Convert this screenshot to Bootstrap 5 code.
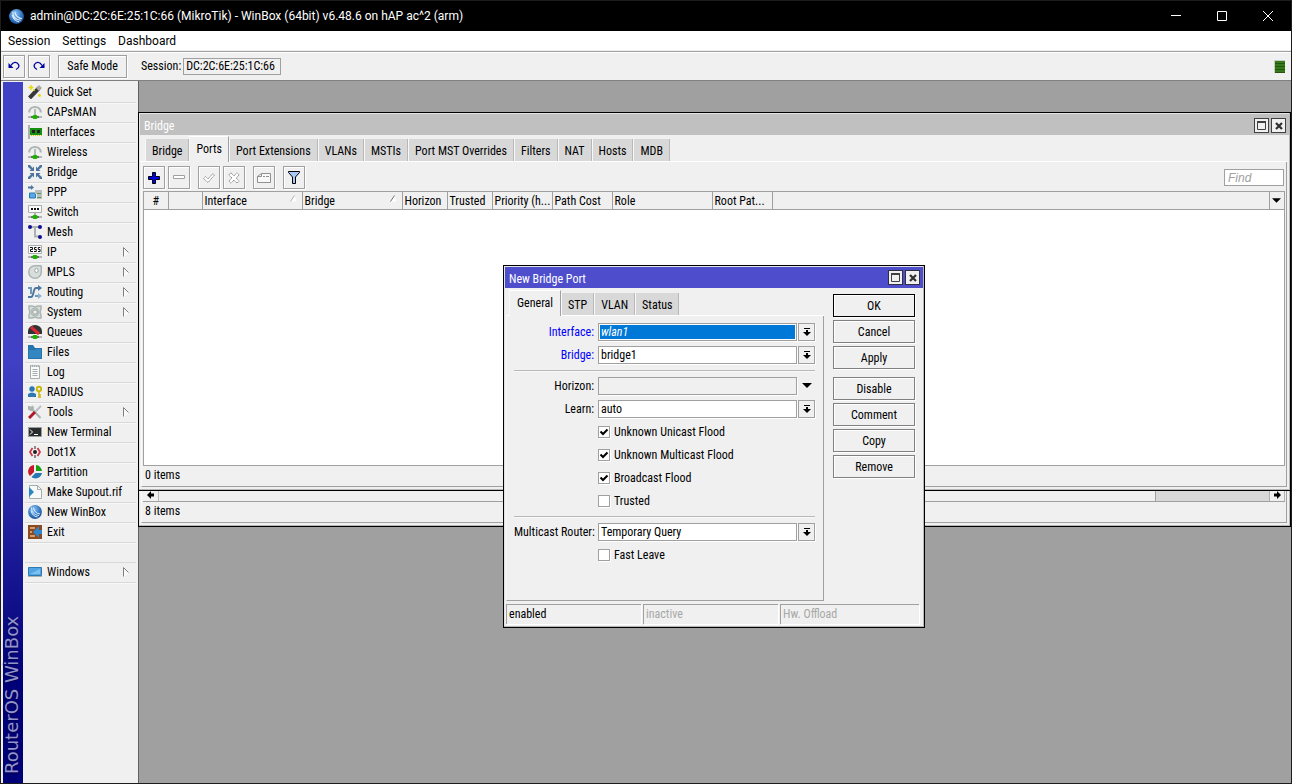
<!DOCTYPE html>
<html lang="en">
<head>
<meta charset="utf-8">
<meta name="viewport" content="width=device-width, initial-scale=1">
<title>WinBox</title>
<link rel="stylesheet" href="https://cdn.jsdelivr.net/npm/bootstrap@5.3.0/dist/css/bootstrap.min.css">
<script src="https://cdn.jsdelivr.net/npm/bootstrap@5.3.0/dist/js/bootstrap.bundle.min.js"></script>
<style>
:root{--face:#f0f0f0;--edge:#a0a0a0;--tab:#d8d8d8}
body{font:12px/16px "Roboto Condensed","Roboto",sans-serif;color:#000;background:var(--face);border:1px solid #1c1c1c;overflow:hidden}
button,input,select{font:inherit;color:inherit;border-radius:0}
svg{display:block;flex:none}
.titlebar{height:30px;background:#000;color:#fff;font:12px/16px "Roboto",sans-serif;padding-left:8px;gap:6px}
.titlebar button{width:46px;height:30px;background:none;border:0;color:#fff;display:grid;place-items:center;padding:0;margin-left:-6px}
.titlebar button:last-child{margin-right:0}
.menubar{height:19px;background:#fff;font:12px/16px "Roboto",sans-serif;gap:12px;padding:2px 7px}
.menubar a{color:#000;text-decoration:none}
.toolbar-main{height:30px;border-top:1px solid var(--edge);border-bottom:1px solid #808080;box-shadow:inset 0 1px #fff;padding:0 6px 0 2px;margin-top:1px}
.tbtn{width:22px;height:23px;border:1px solid var(--edge);background:var(--face);box-shadow:1px 1px #fff,inset 1px 1px #fff;display:grid;place-items:center;padding:0}
.tbtn.near{margin-left:3px}
.safe{width:69px}
.toolbar-main label{margin:0 2px 0 14px}
.sess{width:98px;height:17px;border:1px solid var(--edge);background:var(--face);padding:0 2px;line-height:15px}
.led{width:11px;height:13px;background:repeating-linear-gradient(#357a1a 0 2px,#23560f 2px 3px);border-top:1px solid #c8c8c8;border-left:1px solid #c8c8c8}
.work{min-height:0}
.side{width:137px;padding:1px 2px 0 2px}
.brand{width:20px;background:linear-gradient(#4040c4 0%,#4040c4 40%,#000078 86%);color:#9494c8;font:18px/20px "DejaVu Sans",sans-serif;text-shadow:-1px -1px 2px #00004a}
.brand span{writing-mode:vertical-rl;transform:rotate(180deg);height:100%;padding-top:9px;line-height:18px}
.mainmenu{margin:1px 0 0 2px}
.mainmenu a{height:20px;padding:0 7px 1px 3px;gap:5px;border-bottom:1px solid #d8d8d8;box-shadow:0 1px #f8f8f8;color:#000;text-decoration:none}
.mainmenu a .arrow{margin-left:auto}
.gap{height:20px;border-bottom:1px solid #d8d8d8}
.desk{background:#a0a0a0;box-shadow:inset 1px 0 #606060}
.win{position:absolute;background:var(--face);border:1px solid #000;padding:1px 2px 2px 1px;box-shadow:inset -1px -1px #b8b8b8,inset 1px 1px #e4e4e4}
.w-back{left:0;right:0;top:320px;height:126px}
.w-bridge{left:0;right:0;top:31px;height:379px}
.w-port{left:365px;top:184px;width:422px;height:363px}
.cap{height:21px;background:#c0c0c0;color:#fff;padding:4px 3px 0 4px;margin-right:-1px;gap:2px}
.cap button{width:15px;height:15px;border:1px solid #404040;background:var(--face);display:grid;place-items:center;padding:0}
.w-port .cap{background:#4e4ecc;padding-top:3px}
.w-port .cap button{border-color:#303040}
.w-port .cap span{line-height:18px}
.tabs{height:27px;padding:5px 0 0 5px;border-bottom:1px solid #fff;align-items:flex-end}
.tabs button{height:22px;background:var(--tab);border:0;border-left:1px solid #f8f8f8;border-right:1px solid #b8b8b8;padding:2px 6px 0;line-height:20px;white-space:nowrap}
.tabs button.on{height:26px;background:var(--face);border-top:1px solid #fff;border-right-color:var(--edge);margin-bottom:-1px;padding-bottom:3px}
.pane{border-right:1px solid var(--edge);border-bottom:1px solid var(--edge);border-left:1px solid #f8f8f8}
.w-bridge .pane{margin:0 1px 1px 1px}
.w-back .pane{margin:0 1px 1px 1px}
.strip{height:29px;padding:4px 2px 0 1px}
.find{width:60px;height:17px;border:1px solid var(--edge);padding:0 3px;margin-top:3px;font:italic 12px/15px "Liberation Sans",sans-serif;color:#a0a0a0}
.find::placeholder{color:#a0a0a0}
.grid-box{margin:0 1px;border:1px solid var(--edge);background:#fff}
.grid-box table{table-layout:fixed;width:100%;border-collapse:collapse}
.grid-box th{height:17px;padding:2px 2px 0;font-weight:400;line-height:14px;background:var(--face);border-right:1px solid var(--edge);border-bottom:1px solid var(--edge);white-space:nowrap;overflow:hidden}
.grid-box th:last-child{border-right:0}
.grid-box th svg{float:right;margin:1px 1px 0 0}
.grid-box th button{border:0;background:none;padding:0;width:14px;height:14px;display:grid;place-items:center}
.grid-box th button svg{margin:0}
.count{height:20px;padding:1px 3px}
.form-row{height:23px;gap:4px}
.form-row>label:first-child,.form-row>.lab{width:80px;text-align:right;white-space:nowrap}
.fld{width:199px;height:18px;border:1px solid var(--edge);background:#fff;padding:1px 2px 0;appearance:none;line-height:15px;box-shadow:1px 1px #fff}
.fld.sel{background:#0078d7;color:#fff;font-style:italic;box-shadow:1px 1px #fff,inset 0 0 0 1px #fff}
.fld:disabled{background:var(--face);opacity:1}
.drop{width:17px;height:18px;border:1px solid var(--edge);background:var(--face);display:grid;place-items:center;padding:0;margin-left:-3px;box-shadow:1px 1px #fff}
.drop.bare{border-color:transparent;box-shadow:none}
.req{color:#00f}
.chk{appearance:none;width:12px;height:12px;margin:0;border:1px solid var(--edge);background:#fff;box-shadow:1px 1px #fff}
.chk:checked{background:#fff url("data:image/svg+xml,%3Csvg xmlns='http://www.w3.org/2000/svg' viewBox='0 0 10 10'%3E%3Cpath d='M1.5 4.5 4 7 8.500 2.500' fill='none' stroke='%23000' stroke-width='2'/%3E%3C/svg%3E") center/10px 10px no-repeat}
.rule{height:1px;background:#b8b8b8;margin:4px 0 3px;box-shadow:0 1px #f8f8f8}
.w-port .pane{width:318px;padding:4px 8px 0 7px;margin-left:1px}
.w-port .tabs{width:318px;height:28px;margin-left:1px;padding-left:3px}
.w-port .tabs .on{padding-left:7px;padding-right:7px}
.cmds{width:82px;margin:6px 7px 0 0;gap:3px}
.cmds button{height:23px;border:1px solid #808080;background:var(--face);box-shadow:1px 1px #fff,inset 1px 1px #fff;padding:0}
.cmds .def{border-color:#000}
.cmds .apart{margin-top:5px}
.states{gap:2px;margin:3px 3px 1px 1px}
.cell{flex:0 0 135px;height:20px;border-top:1px solid var(--edge);border-left:1px solid var(--edge);box-shadow:1px 1px #fff;padding:1px 2px}
.cell:last-child{flex:1}
.off{color:#a8a8a8}
.scroller{height:12px;border-bottom:1px solid var(--edge);background:var(--tab);margin:0 1px}
.thumb{background:var(--face);border-right:1px solid var(--edge)}
</style>
</head>
<body class="vh-100 d-flex flex-column">
<svg width="0" height="0" class="position-absolute">
 <defs>
  <radialGradient id="ball" cx=".4" cy=".3" r=".8"><stop offset="0" stop-color="#8cc4f4"/><stop offset=".6" stop-color="#2f72be"/><stop offset="1" stop-color="#184a90"/></radialGradient>
  <symbol id="winbox" viewBox="0 0 14 14"><circle cx="7" cy="7" r="6.9" fill="url(#ball)"/><path d="M3.5 2.5C3.5 7 6 10 11 10.500M5.500 2.500C6 6 8 8.500 12 9M3 5.500C4 9.500 6 11.500 9.500 12" fill="none" stroke="#dceeff" stroke-width="1"/></symbol>
  <symbol id="port" viewBox="0 0 14 14"><path d="M0 12h14" stroke="#b4b8b4" stroke-width="2"/><path d="M3 12h8" stroke="#555" stroke-width="1.500"/><path d="M5.500 10h3l1 1v2l-1 1h-3l-1-1v-2z" fill="#1cb000"/></symbol>
  <symbol id="antenna" viewBox="0 0 14 14"><path d="M1.200 7.500C1.200 0 12.800 0 12.800 7.500" fill="none" stroke="#aeb6b4" stroke-width="2"/><path d="M7 4v7" stroke="#a4acaa" stroke-width="1.600"/><use href="#port"/></symbol>
  <symbol id="more" viewBox="0 0 6 10"><path d="M5.500 5.500.5 9.500V.5z" fill="#f8f8f8" stroke="#fff"/><path d="M.5 9.500V.5l5 5" fill="none" stroke="#808080"/></symbol>
  <symbol id="dropbar" viewBox="0 0 8 8"><path d="M1 0h6v1H1zM3 2h2v2h3L4 8 0 4h3z"/></symbol>
  <symbol id="droptri" viewBox="0 0 10 5"><path d="M0 0h10L5 5z"/></symbol>
  <symbol id="max" viewBox="0 0 9 9"><path d="M.5 1h8v7.500h-8z" fill="none" stroke="#404040"/><path d="M0 1h9" stroke="#404040" stroke-width="2"/></symbol>
  <symbol id="cls" viewBox="0 0 8 8"><path d="M1 1l6 6M7 1 1 7" stroke="#303030" stroke-width="2.200"/></symbol>
 </defs>
</svg>

<header class="titlebar d-flex align-items-center flex-shrink-0">
 <svg width="15" height="15"><use href="#winbox"/></svg>
 <span class="me-auto text-nowrap">admin@DC:2C:6E:25:1C:66 (MikroTik) - WinBox (64bit) v6.48.6 on hAP ac^2 (arm)</span>
 <button aria-label="Minimize"><svg width="10" height="10"><path d="M0 4.500h10" stroke="#fff"/></svg></button>
 <button aria-label="Maximize"><svg width="10" height="10"><path d="M.5.5h9v9h-9z" fill="none" stroke="#fff"/></svg></button>
 <button aria-label="Close"><svg width="10" height="10"><path d="M0 0l10 10M10 0 0 10" stroke="#fff"/></svg></button>
</header>
<nav class="menubar d-flex flex-shrink-0"><a href="#">Session</a><a href="#">Settings</a><a href="#">Dashboard</a></nav>
<div class="toolbar-main d-flex align-items-center flex-shrink-0">
 <button class="tbtn" aria-label="Undo"><svg width="12" height="10" fill="none" stroke="#0000a0"><path d="M3 4.500C5 .5 9 .5 10.500 3.500 12 6.500 9 8 8 8.500" stroke-width="1.300"/><path d="M.5 2v5h5z" fill="#0000a0" stroke="none"/></svg></button>
 <button class="tbtn near" aria-label="Redo"><svg width="12" height="10" fill="none" stroke="#0000a0"><path d="M9 4.500C7 .5 3 .5 1.500 3.500 0 6.500 3 8 4 8.500" stroke-width="1.300"/><path d="M11.500 2v5h-5z" fill="#0000a0" stroke="none"/></svg></button>
 <button class="tbtn safe ms-2">Safe Mode</button>
 <label for="sess">Session:</label>
 <input id="sess" class="sess me-auto" value="DC:2C:6E:25:1C:66" readonly>
 <span class="led"></span>
</div>

<div class="work d-flex flex-grow-1">
 <aside class="side d-flex flex-shrink-0">
  <div class="brand"><span class="d-block">RouterOS WinBox</span></div>
  <ul class="mainmenu list-unstyled flex-grow-1">
   <li><a href="#" class="d-flex align-items-center"><svg width="14" height="14"><path d="M1.500 13 11 3" stroke="#383838" stroke-width="4"/><path d="M9.500 4.500 12.500 1.500" stroke="#a8a8a8" stroke-width="4"/><path d="M3 0v5M.5 2.500h5M11.500 9v3M10 10.500h3M5 5h2" stroke="#e4dc10" stroke-width="1.500"/></svg>Quick Set</a></li>
   <li><a href="#" class="d-flex align-items-center"><svg width="14" height="14"><use href="#antenna"/></svg>CAPsMAN</a></li>
   <li><a href="#" class="d-flex align-items-center"><svg width="14" height="14"><path d="M1 0v14" stroke="#a8b0b0" stroke-width="2"/><path d="M2 3h12v7H2z" fill="#159010"/><path d="M4 5h3v3H4zM9 5h3v3H9z" fill="#222"/><path d="M3 10.500h11" stroke="#d8c818" stroke-dasharray="1 1"/></svg>Interfaces</a></li>
   <li><a href="#" class="d-flex align-items-center"><svg width="14" height="14"><use href="#antenna"/></svg>Wireless</a></li>
   <li><a href="#" class="d-flex align-items-center"><svg width="14" height="14" fill="#4c769e"><path d="M6 6H1.500L3 4.500 0 2V0h2l2.500 3L6 1.500zM8 6V1.500L9.500 3 12 0h2v2l-3 2.500L12.500 6zM6 8v4.500L4.500 11 2 14H0v-2l3-2.500L1.500 8zM8 8h4.500L11 9.500l3 2.500v2h-2l-2.500-3L8 12.500z"/></svg>Bridge</a></li>
   <li><a href="#" class="d-flex align-items-center"><svg width="14" height="14"><path d="M0 2.500h4" stroke="#4c769e" stroke-width="2"/><path d="M3 0l3 2.500L3 5z" fill="#4c769e"/><path d="M1.500 8h6v5h-6z" fill="#58a8e8" stroke="#2878b8"/><path d="M7 5h7v9H9V9H7z" fill="#b8bebc"/><path d="M9 8.500h4M9 12.500h4" stroke="#5a9a50"/></svg>PPP</a></li>
   <li><a href="#" class="d-flex align-items-center"><svg width="14" height="14"><path d="M.5.500h13v7H.5z" fill="#fafafa" stroke="#a8b0ae"/><path d="M3 4h8" stroke="#111" stroke-width="2" stroke-dasharray="2 1"/><path d="M7 7v4" stroke="#a8b0ae" stroke-width="2"/><use href="#port"/></svg>Switch</a></li>
   <li><a href="#" class="d-flex align-items-center"><svg width="14" height="14"><path d="M3 2h8M7 2v9.500h4" fill="none" stroke="#aab2b0" stroke-width="2"/><g fill="#101090"><circle cx="2" cy="2" r="2"/><circle cx="12" cy="2" r="2"/><circle cx="12" cy="12" r="2"/></g></svg>Mesh</a></li>
   <li><a href="#" class="d-flex align-items-center"><svg width="14" height="14"><path d="M.5.5h13v8H.5z" fill="#fafafa" stroke="#a8b0ae"/><path d="M2 2.500h2.500v2H2.500v2H5M8.500 2.500H6.500v2h1.800v2H6M12.300 2.500h-2v2h1.800v2H10" fill="none" stroke="#111"/><use href="#port"/></svg>IP<svg class="arrow" width="6" height="10"><use href="#more"/></svg></a></li>
   <li><a href="#" class="d-flex align-items-center"><svg width="14" height="14"><path d="M7 0h6l1 1v6a7 7 0 1 1-7-7z" fill="#aab4b2"/><path d="M7 1.500h5.500V7a5.500 5.500 0 1 1-5.500-5.500z" fill="#d8dedc"/><ellipse cx="8.500" cy="5.500" rx="1.700" ry="2.200" fill="#fff" stroke="#9ca6a4"/></svg>MPLS<svg class="arrow" width="6" height="10"><use href="#more"/></svg></a></li>
   <li><a href="#" class="d-flex align-items-center"><svg width="14" height="14" fill="none" stroke-width="2"><path d="M0 12h3c3 0 2-9 5-9h3" stroke="#4c769e"/><path d="M0 3h3v6M7 11h4" stroke="#6c98bc"/><path d="M10 0l4 3-4 3z" fill="#4c769e"/><path d="M10 8l4 3-4 3z" fill="#8cb4d4"/></svg>Routing<svg class="arrow" width="6" height="10"><use href="#more"/></svg></a></li>
   <li><a href="#" class="d-flex align-items-center"><svg width="14" height="14" fill="none" stroke="#aab4b0"><path d="M1 1h3l3 1 3-1h3v3l-1 3 1 3v3h-3l-3-1-3 1H1v-3l1-3-1-3z" stroke-width="1.500" fill="#d8dedb"/><circle cx="7" cy="7" r="4"/><circle cx="7" cy="7" r="2.300" stroke-width="1.500" fill="#f0f0f0"/></svg>System<svg class="arrow" width="6" height="10"><use href="#more"/></svg></a></li>
   <li><a href="#" class="d-flex align-items-center"><svg width="14" height="14"><path d="M0 9V6a7 6 0 0 1 14 0v3z" fill="#303434"/><path d="M3 2l8 7" stroke="#d82838" stroke-width="3"/><use href="#port"/></svg>Queues</a></li>
   <li><a href="#" class="d-flex align-items-center"><svg width="14" height="14"><path d="M0 0h5l2 3h7v11H0z" fill="#2474ae"/><path d="M1 5h6l2-1h4v9H1z" fill="#3486c0"/></svg>Files</a></li>
   <li><a href="#" class="d-flex align-items-center"><svg width="14" height="14"><path d="M2.500 1h9v12.500h-9z" fill="#fafafa" stroke="#a4aeaa"/><path d="M2 1h10" stroke="#a4aeaa" stroke-width="2" stroke-dasharray="1 1"/><path d="M4.500 4.500h5M4.500 6.500h5M4.500 8.500h5M4.500 10.500h5" stroke="#a4aeaa"/></svg>Log</a></li>
   <li><a href="#" class="d-flex align-items-center"><svg width="14" height="14"><circle cx="4" cy="4" r="2.700" fill="#2c78b0"/><path d="M0 12V9q4-3 8 0v3z" fill="#2c78b0"/><circle cx="11" cy="4" r="2.200" fill="none" stroke="#ccb80c" stroke-width="2"/><path d="M11 6v7M11 10h2M11 12h2" stroke="#ccb80c" stroke-width="1.500"/></svg>RADIUS</a></li>
   <li><a href="#" class="d-flex align-items-center"><svg width="14" height="14" fill="none"><path d="M2 2l10.500 11M1 1v3l2 1 2-2-1-2" stroke="#a8b2b0" stroke-width="2"/><path d="M13 1 7 7" stroke="#b8c0be" stroke-width="2"/><path d="M7 7l-6 6" stroke="#b01828" stroke-width="3"/></svg>Tools<svg class="arrow" width="6" height="10"><use href="#more"/></svg></a></li>
   <li><a href="#" class="d-flex align-items-center"><svg width="14" height="14"><path d="M.5 2.500h13v9H.5z" fill="#282c2c" stroke="#98a09e"/><path d="M2 4.500 4.500 7 2 9.500M6 9.500h4" fill="none" stroke="#fff"/></svg>New Terminal</a></li>
   <li><a href="#" class="d-flex align-items-center"><svg width="14" height="14" fill="none"><path d="M4.500 3 2 7l2.500 4M9.500 3 12 7l-2.500 4" stroke="#cc3a4a" stroke-width="1.800"/><path d="M7 1v12" stroke="#222" stroke-dasharray="3 1.500 3 1.500"/><circle cx="7" cy="7" r="2" fill="#222"/></svg>Dot1X</a></li>
   <li><a href="#" class="d-flex align-items-center"><svg width="14" height="14"><path d="M6 0v7l-4 4A6.500 6.500 0 0 1 6 0z" fill="#c41c2c"/><path d="M8 0a6.500 6.500 0 0 1 6 6H8z" fill="#18a010"/><path d="M7.500 8H14a6.500 6.500 0 0 1-10.500 4z" fill="#2878b4"/></svg>Partition</a></li>
   <li><a href="#" class="d-flex align-items-center"><svg width="14" height="14"><path d="M1.500.5h8l4 4v9h-12z" fill="#f8faf9" stroke="#a4aeaa"/><path d="M9.500.5v4h4" fill="none" stroke="#a4aeaa"/><path d="M1 2l5 5-5 5z" fill="#2c86c4"/></svg>Make Supout.rif</a></li>
   <li><a href="#" class="d-flex align-items-center"><svg width="14" height="14"><use href="#winbox"/></svg>New WinBox</a></li>
   <li><a href="#" class="d-flex align-items-center"><svg width="14" height="14"><path d="M0 0h14v14H0z" fill="#8c4a20"/><path d="M2 3h5M2 11h5M2 7h2" stroke="#e8b888" stroke-width="1.500"/><path d="M5 7l6-6v4h3v4h-3v4z" fill="#2c86d0"/></svg>Exit</a></li>
   <li class="gap"></li>
   <li><a href="#" class="d-flex align-items-center"><svg width="14" height="14"><path d="M.5 2.500h13v8H.5z" fill="#50a4e4" stroke="#2c78b0"/><path d="M2 9 12 4v5z" fill="#7cc0f0"/><path d="M0 11.500h14" stroke="#a8b2b0"/></svg>Windows<svg class="arrow" width="6" height="10"><use href="#more"/></svg></a></li>
  </ul>
 </aside>

 <main class="desk flex-grow-1 position-relative overflow-hidden">
  <section class="win w-back d-flex flex-column justify-content-end">
   <div class="pane">
    <div class="scroller d-flex justify-content-between">
     <span class="d-flex w-100"><svg width="16" height="11"><path d="M0 0h16v11H0z" fill="#f0f0f0"/><path d="M4 5l4-4v2.500h3v3H8V9z"/><path d="M15.500 0v11" stroke="#b8b8b8"/></svg><span class="thumb" style="width:88.500%"></span></span>
     <svg width="16" height="11"><path d="M0 0h16v11H0z" fill="#f0f0f0"/><path d="M12 5 8 1v2.500H5v3h3V9z"/><path d="M.5 0v11M15.500 0v11" stroke="#b0b0b0"/></svg>
    </div>
    <div class="count">8 items</div>
   </div>
  </section>

  <section class="win w-bridge d-flex flex-column">
   <div class="cap d-flex"><span class="me-auto">Bridge</span><button aria-label="Maximize"><svg width="9" height="9"><use href="#max"/></svg></button><button aria-label="Close"><svg width="8" height="8"><use href="#cls"/></svg></button></div>
   <div class="tabs d-flex flex-shrink-0"><button>Bridge</button><button class="on">Ports</button><button>Port Extensions</button><button>VLANs</button><button>MSTIs</button><button>Port MST Overrides</button><button>Filters</button><button>NAT</button><button>Hosts</button><button>MDB</button></div>
   <div class="pane flex-grow-1 d-flex flex-column">
    <div class="strip d-flex">
     <button class="tbtn" aria-label="Add"><svg width="12" height="12"><path d="M4.500.5h3v4h4v3h-4v4h-3v-4h-4v-3h4z" fill="#0000e8" stroke="#000"/></svg></button>
     <button class="tbtn near" aria-label="Remove"><svg width="12" height="5"><path d="M.5.5h11v3H.5z" fill="#fff" stroke="#a0a0a0"/></svg></button>
     <button class="tbtn ms-2" aria-label="Enable"><svg width="12" height="12"><path d="M.5 6.500l2-2L5 7l5-5.500L11.500 3 5 10.500z" fill="#fff" stroke="#909090" stroke-dasharray="1.500 .5"/></svg></button>
     <button class="tbtn near" aria-label="Disable"><svg width="12" height="12"><path d="M3 .8 6 4l3-3.200L11.200 3 8 6l3.200 3L9 11.200 6 8l-3 3.200L.8 9 4 6 .8 3z" fill="#fff" stroke="#909090" stroke-dasharray="1.500 .5"/></svg></button>
     <button class="tbtn ms-2" aria-label="Comment"><svg width="14" height="12"><path d="M.5 4.500l4-3h9v9H.5z" fill="#f8f8f8" stroke="#909090"/><path d="M.5 4.500h4v-3M6 4.500h2M9 4.500h3" fill="none" stroke="#909090"/></svg></button>
     <button class="tbtn ms-2 me-auto" aria-label="Filter"><svg width="12" height="13"><path d="M.5.5h11v1L7.500 6v6.500h-3V6L.5 1.500z" fill="#a8c8f8" stroke="#000"/></svg></button>
     <input class="find" placeholder="Find" aria-label="Find">
    </div>
    <div class="grid-box flex-grow-1">
     <table>
      <colgroup><col style="width:24px"><col style="width:34px"><col style="width:100px"><col style="width:100px"><col style="width:45px"><col style="width:45px"><col style="width:60px"><col style="width:60px"><col style="width:100px"><col style="width:60px"><col><col style="width:15px"></colgroup>
      <thead><tr><th class="text-center">#</th><th></th><th>Interface<svg width="9" height="8"><path d="M.5 6.500h6L4.500.5z" fill="#fff"/><path d="M.5 6.500 4.500.5" fill="none" stroke="#b0b0b0"/></svg></th><th>Bridge<svg width="9" height="8"><path d="M.5 6.500h6L4.500.5z" fill="#fff"/><path d="M.5 6.500 4.500.5" fill="none" stroke="#707070"/></svg></th><th>Horizon</th><th>Trusted</th><th>Priority (h...</th><th>Path Cost</th><th>Role</th><th>Root Pat...</th><th></th><th class="p-0"><button aria-label="Columns"><svg width="9" height="5"><use href="#droptri"/></svg></button></th></tr></thead>
     </table>
    </div>
    <div class="count">0 items</div>
   </div>
  </section>

  <section class="win w-port d-flex flex-column">
   <div class="cap d-flex"><span class="me-auto">New Bridge Port</span><button aria-label="Maximize"><svg width="9" height="9"><use href="#max"/></svg></button><button aria-label="Close"><svg width="8" height="8"><use href="#cls"/></svg></button></div>
   <div class="d-flex flex-grow-1 justify-content-between">
    <div class="d-flex flex-column">
     <div class="tabs d-flex flex-shrink-0"><button class="on">General</button><button>STP</button><button>VLAN</button><button>Status</button></div>
     <form class="pane flex-grow-1">
      <div class="form-row d-flex align-items-center"><label for="f1" class="req">Interface:</label><select id="f1" class="fld sel"><option>wlan1</option></select><button type="button" class="drop" aria-label="Open"><svg width="8" height="8"><use href="#dropbar"/></svg></button></div>
      <div class="form-row d-flex align-items-center"><label for="f2" class="req">Bridge:</label><select id="f2" class="fld"><option>bridge1</option></select><button type="button" class="drop" aria-label="Open"><svg width="8" height="8"><use href="#dropbar"/></svg></button></div>
      <div class="rule"></div>
      <div class="form-row d-flex align-items-center"><label for="f3">Horizon:</label><input id="f3" class="fld" disabled><button type="button" class="drop bare" aria-label="Show"><svg width="10" height="5"><use href="#droptri"/></svg></button></div>
      <div class="form-row d-flex align-items-center"><label for="f4">Learn:</label><select id="f4" class="fld"><option>auto</option></select><button type="button" class="drop" aria-label="Open"><svg width="8" height="8"><use href="#dropbar"/></svg></button></div>
      <div class="form-row d-flex align-items-center"><span class="lab"></span><input type="checkbox" class="chk" id="c1" checked><label for="c1">Unknown Unicast Flood</label></div>
      <div class="form-row d-flex align-items-center"><span class="lab"></span><input type="checkbox" class="chk" id="c2" checked><label for="c2">Unknown Multicast Flood</label></div>
      <div class="form-row d-flex align-items-center"><span class="lab"></span><input type="checkbox" class="chk" id="c3" checked><label for="c3">Broadcast Flood</label></div>
      <div class="form-row d-flex align-items-center"><span class="lab"></span><input type="checkbox" class="chk" id="c4"><label for="c4">Trusted</label></div>
      <div class="rule"></div>
      <div class="form-row d-flex align-items-center"><label for="f5">Multicast Router:</label><select id="f5" class="fld"><option>Temporary Query</option></select><button type="button" class="drop" aria-label="Open"><svg width="8" height="8"><use href="#dropbar"/></svg></button></div>
      <div class="form-row d-flex align-items-center"><span class="lab"></span><input type="checkbox" class="chk" id="c5"><label for="c5">Fast Leave</label></div>
     </form>
    </div>
    <div class="cmds d-flex flex-column"><button class="def">OK</button><button>Cancel</button><button>Apply</button><button class="apart">Disable</button><button>Comment</button><button>Copy</button><button>Remove</button></div>
   </div>
   <div class="states d-flex"><div class="cell">enabled</div><div class="cell off">inactive</div><div class="cell off">Hw. Offload</div></div>
  </section>
 </main>
</div>
</body>
</html>
